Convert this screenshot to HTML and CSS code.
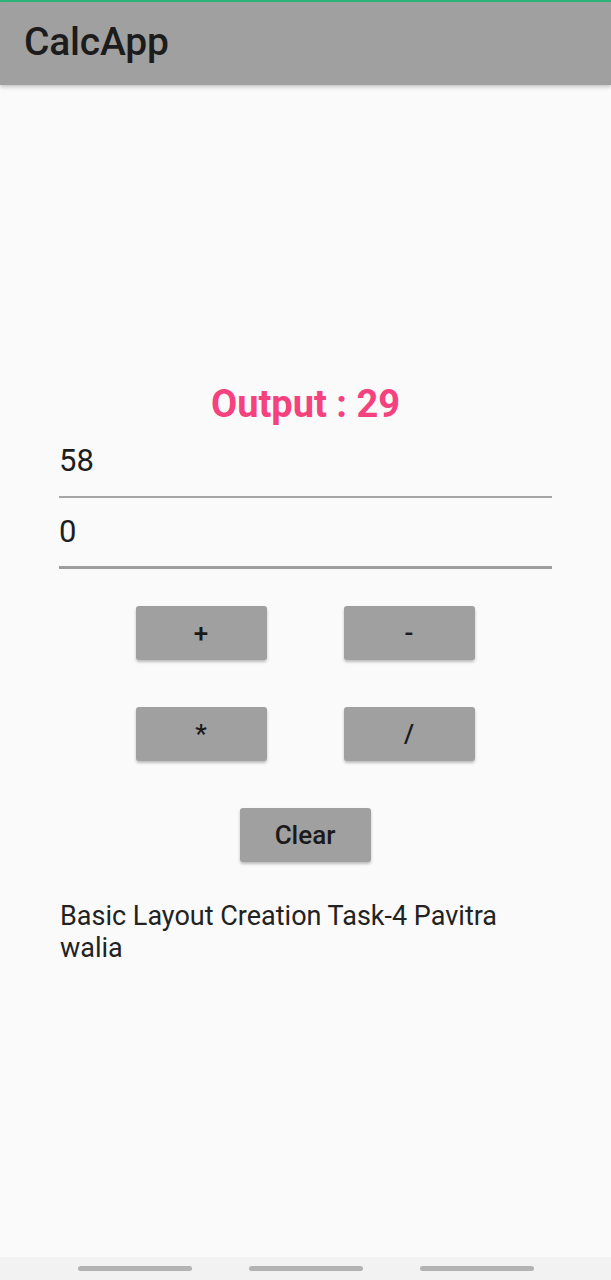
FILE: index.html
```html
<!DOCTYPE html>
<html>
<head>
<meta charset="utf-8">
<link rel="stylesheet" href="styles.css">
</head>
<body>
<div class="screen">
  <div class="status"></div>
  <header class="appbar"><span class="title">CalcApp</span></header>
  <main class="main">
    <div class="content">
      <div class="output">Output : 29</div>
      <div class="field field-a">58</div>
      <div class="field field-b">0</div>
      <div class="btn-row btn-row-first">
        <button class="btn">+</button>
        <button class="btn">-</button>
      </div>
      <div class="btn-row">
        <button class="btn">*</button>
        <button class="btn">/</button>
      </div>
      <div class="btn-row">
        <button class="btn">Clear</button>
      </div>
      <p class="footer-text">Basic Layout Creation Task-4 Pavitra walia</p>
    </div>
  </main>
  <nav class="navbar">
    <span class="pill"></span>
    <span class="pill"></span>
    <span class="pill"></span>
  </nav>
</div>
</body>
</html>
```
FILE: styles.css
```css
html, body {
  margin: 0;
  padding: 0;
}
body {
  background: #fafafa;
  font-family: Roboto, "Noto Sans", sans-serif;
  color: #202020;
}
.screen {
  width: 611px;
  height: 1280px;
  display: flex;
  flex-direction: column;
  overflow: hidden;
}
.status {
  height: 2px;
  background: #2cb67b;
  flex: none;
}
.appbar {
  height: 83px;
  flex: none;
  background: #a0a0a0;
  display: flex;
  align-items: center;
  padding-left: 24px;
  box-shadow: 0 2px 4px rgba(0,0,0,0.22);
  position: relative;
  z-index: 1;
}
.title {
  font-size: 39px;
  font-weight: 500;
  color: #1c1c1c;
  letter-spacing: -0.2px;
  margin-top: -4px;
}
.main {
  flex: 1;
  display: flex;
  flex-direction: column;
  justify-content: center;
}
.content {
  padding: 2px 60px 0 60px;
}
.output {
  font-size: 38px;
  line-height: 46px;
  font-weight: 700;
  color: #f5417d;
  text-align: center;
}
.field {
  font-size: 31px;
  line-height: 36px;
  color: #1e1e1e;
  padding: 16px 0 17px 0;
  margin: 0 -1px;
}
.field-a {
  border-bottom: 2px solid #a6a6a6;
}
.field-b {
  padding-bottom: 16px;
  border-bottom: 3px solid #9e9e9e;
}
.btn-row {
  display: flex;
  justify-content: center;
  gap: 77px;
  margin-top: 47px;
  padding-right: 1px;
}
.btn-row-first {
  margin-top: 37px;
}
.btn {
  width: 131px;
  height: 54px;
  border: none;
  border-radius: 3px;
  background: #a0a0a0;
  box-shadow: 0 2px 3px rgba(0,0,0,0.25);
  font-family: Roboto, "Noto Sans", sans-serif;
  font-size: 26px;
  font-weight: 500;
  color: #1a1a1a;
  padding: 0;
}
.footer-text {
  margin: 38px 0 0 0;
  font-size: 27px;
  line-height: 32px;
  color: #222;
}
.navbar {
  height: 23px;
  flex: none;
  background: #f2f2f2;
  display: flex;
  justify-content: center;
  align-items: center;
  gap: 57px;
}
.pill {
  width: 114px;
  height: 5px;
  border-radius: 3px;
  background: #b3b3b3;
}
```
